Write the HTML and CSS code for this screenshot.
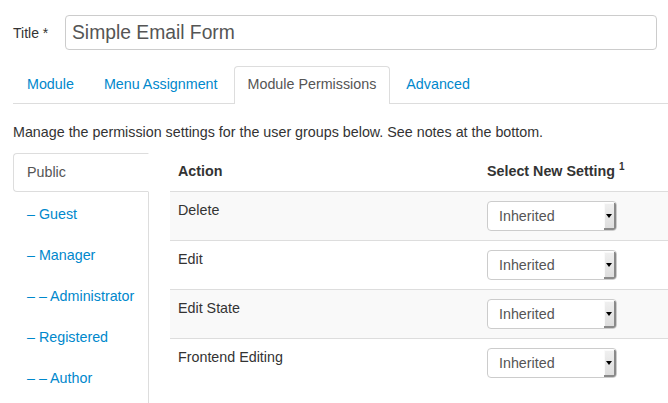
FILE: index.html
```html
<!DOCTYPE html>
<html>
<head>
<meta charset="utf-8">
<link rel="stylesheet" href="styles.css">
</head>
<body>
<div class="page">
  <div class="title-row">
    <label class="title-label">Title *</label>
    <div class="title-input">Simple Email Form</div>
  </div>
  <ul class="tabs">
    <li class="tab"><a>Module</a></li>
    <li class="tab"><a>Menu Assignment</a></li>
    <li class="tab active"><a>Module Permissions</a></li>
    <li class="tab"><a>Advanced</a></li>
  </ul>
  <p class="desc">Manage the permission settings for the user groups below. See notes at the bottom.</p>
  <div class="perm">
    <ul class="side">
      <li class="side-item active">Public</li>
      <li class="side-item">– Guest</li>
      <li class="side-item">– Manager</li>
      <li class="side-item">– – Administrator</li>
      <li class="side-item">– Registered</li>
      <li class="side-item">– – Author</li>
    </ul>
    <table class="grid">
      <thead>
        <tr><th class="col-action">Action</th><th>Select New Setting <sup>1</sup></th></tr>
      </thead>
      <tbody>
        <tr class="odd"><td>Delete</td><td><div class="select"><span class="sel-text">Inherited</span><span class="sel-btn"><span class="tri"></span></span></div></td></tr>
        <tr><td>Edit</td><td><div class="select"><span class="sel-text">Inherited</span><span class="sel-btn"><span class="tri"></span></span></div></td></tr>
        <tr class="odd"><td>Edit State</td><td><div class="select"><span class="sel-text">Inherited</span><span class="sel-btn"><span class="tri"></span></span></div></td></tr>
        <tr><td>Frontend Editing</td><td><div class="select"><span class="sel-text">Inherited</span><span class="sel-btn"><span class="tri"></span></span></div></td></tr>
      </tbody>
    </table>
  </div>
</div>
</body>
</html>
```

FILE: styles.css
```css
html, body {
  margin: 0;
  padding: 0;
  background: #fff;
}
body {
  font-family: "Liberation Sans", Arial, sans-serif;
  font-size: 14.3px;
  line-height: 18px;
  color: #333;
  overflow: hidden;
}
.page {
  padding: 15px 0 0 13px;
}
.title-row {
  display: flex;
  align-items: center;
}
.title-label {
  width: 52px;
  flex: none;
  font-size: 14px;
}
.title-input {
  box-sizing: border-box;
  width: 592px;
  height: 35px;
  border: 1px solid #ccc;
  border-radius: 4px;
  padding: 0 6px;
  font-size: 19.3px;
  line-height: 33px;
  color: #555;
}
.tabs {
  list-style: none;
  margin: 16px 0 0;
  padding: 0;
  display: flex;
  border-bottom: 1px solid #ddd;
}
.tab {
  margin-right: 2px;
  margin-bottom: -1px;
  padding: 8px 13px 11px;
  border: 1px solid transparent;
  border-bottom: none;
  border-radius: 4px 4px 0 0;
  color: #0088cc;
}
.tab.active {
  border-color: #ddd;
  background: #fff;
  color: #555;
}
.desc {
  margin: 18px 0 11px;
  line-height: 20px;
}
.perm {
  display: flex;
  align-items: flex-start;
}
.side {
  list-style: none;
  margin: 0 21px 0 0;
  padding: 0 0 8px;
  width: 136px;
  box-sizing: border-box;
  border-right: 1px solid #ddd;
  flex: none;
}
.side-item {
  padding: 12px 13px 9px;
  border: 1px solid transparent;
  margin-right: -1px;
  color: #0088cc;
  white-space: nowrap;
}
.side-item.active {
  padding: 9px 13px 10px;
  border-color: #ddd;
  border-right-color: #fff;
  border-radius: 4px 0 0 4px;
  background: #fff;
  color: #555;
}
.grid {
  flex: 1;
  border-collapse: collapse;
}
.grid th {
  text-align: left;
  font-weight: bold;
  padding: 9px 8px 11px;
  white-space: nowrap;
}
.grid th sup {
  font-size: 10px;
  line-height: 0;
  vertical-align: 6px;
}
.col-action {
  width: 293px;
}
.grid td {
  padding: 9px 8px;
  border-top: 1px solid #ddd;
  vertical-align: top;
}
.grid tr.odd td {
  background: #f9f9f9;
}
.select {
  box-sizing: border-box;
  width: 130px;
  height: 30px;
  border: 1px solid #ccc;
  border-radius: 4px;
  background: #fff;
  display: flex;
  overflow: hidden;
}
.sel-text {
  flex: 1;
  padding-left: 11px;
  line-height: 28px;
  color: #555;
}
.sel-btn {
  width: 12px;
  margin: 1px 0 0;
  background: linear-gradient(#f0f0f0, #dcdcdc);
  box-shadow: inset -2px -2px 0 #8a8a8a, inset 1px 1px 0 #fafafa;
  display: flex;
  align-items: center;
  justify-content: center;
}
.tri {
  width: 0;
  height: 0;
  border-left: 3px solid transparent;
  border-right: 3px solid transparent;
  border-top: 4px solid #000;
  margin: 0 2px 1px 0;
}
```
